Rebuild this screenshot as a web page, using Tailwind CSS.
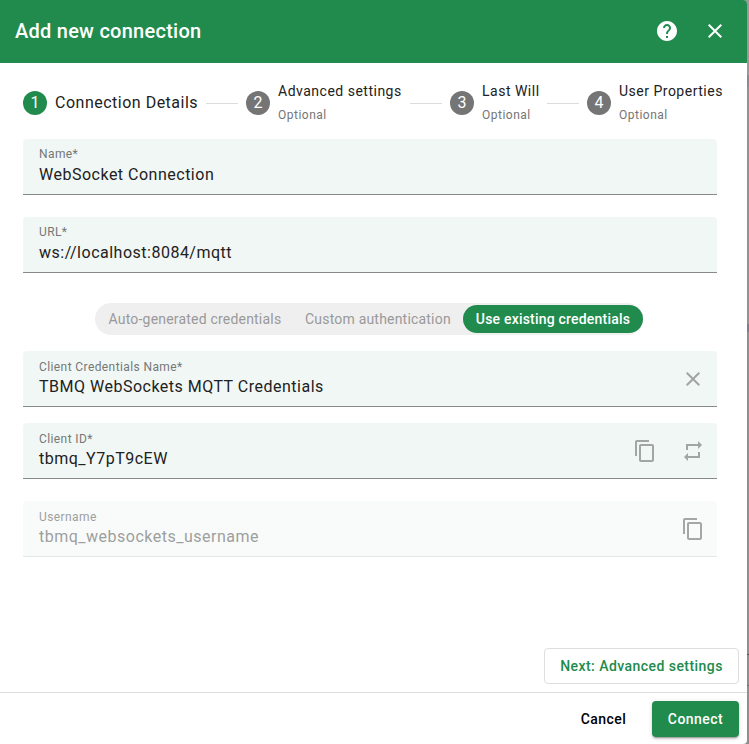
<!DOCTYPE html>
<html lang="en">
<head>
<meta charset="utf-8">
<title>Add new connection</title>
<script src="https://cdn.jsdelivr.net/npm/@tailwindcss/browser@4"></script>
</head>
<body class="w-[749px] h-[744px] overflow-hidden bg-[#8f8f8f] font-[Roboto,sans-serif] text-[#212121] flex">
<svg class="hidden">
  <symbol id="close" viewBox="0 0 24 24"><path d="M19 6.41 17.59 5 12 10.59 6.41 5 5 6.41 10.59 12 5 17.59 6.41 19 12 13.41 17.59 19 19 17.59 13.41 12z"/></symbol>
  <symbol id="copy" viewBox="0 0 24 24"><path d="M16 1H4c-1.1 0-2 .9-2 2v14h2V3h12V1zm3 4H8c-1.1 0-2 .9-2 2v14c0 1.1.9 2 2 2h11c1.1 0 2-.9 2-2V7c0-1.1-.9-2-2-2zm0 16H8V7h11v14z"/></symbol>
</svg>
<div class="w-[747px] shrink-0 h-[744px] bg-white flex flex-col rounded-r">
  <header class="h-[63px] shrink-0 bg-[#208b4d] text-white flex items-center pl-[15px] pr-5 pb-0.5 rounded-tr">
    <h1 class="flex-1 text-[20px] leading-8 font-medium tracking-[0.25px]">Add new connection</h1>
    <svg class="size-6 mr-6" fill="currentColor" viewBox="0 0 24 24"><path d="M12 2C6.48 2 2 6.48 2 12s4.48 10 10 10 10-4.48 10-10S17.52 2 12 2zm1 17h-2v-2h2v2zm2.07-7.75-.9.92C13.45 12.9 13 13.5 13 15h-2v-.5c0-1.1.45-2.1 1.17-2.83l1.24-1.26c.37-.36.59-.86.59-1.41 0-1.1-.9-2-2-2s-2 .9-2 2H8c0-2.21 1.79-4 4-4s4 1.79 4 4c0 .88-.36 1.68-.93 2.25z"/></svg>
    <svg class="size-6" fill="currentColor"><use href="#close"/></svg>
  </header>

  <nav class="h-[76px] pt-1 shrink-0 flex items-center pl-[23px] whitespace-nowrap">
    <div class="size-6 mr-2 rounded-full bg-[#208b4d] text-white text-[16px] grid place-items-center">1</div>
    <div class="w-[143px] text-[16px] leading-6 tracking-[0.5px]">Connection Details</div>
    <div class="w-8 h-px mx-2 bg-[#dcdcdc]"></div>
    <div class="size-6 mr-2 rounded-full bg-[#757575] text-white text-[16px] grid place-items-center">2</div>
    <div class="w-[124px]"><div class="text-[14px] leading-6 tracking-[0.5px]">Advanced settings</div><div class="text-[12px] leading-6 tracking-[0.5px] text-[#757575]">Optional</div></div>
    <div class="w-8 h-px mx-2 bg-[#dcdcdc]"></div>
    <div class="size-6 mr-2 rounded-full bg-[#757575] text-white text-[16px] grid place-items-center">3</div>
    <div class="w-[57px]"><div class="text-[14px] leading-6 tracking-[0.5px]">Last Will</div><div class="text-[12px] leading-6 tracking-[0.5px] text-[#757575]">Optional</div></div>
    <div class="w-8 h-px mx-2 bg-[#dcdcdc]"></div>
    <div class="size-6 mr-2 rounded-full bg-[#757575] text-white text-[16px] grid place-items-center">4</div>
    <div><div class="text-[14px] leading-6 tracking-[0.5px]">User Properties</div><div class="text-[12px] leading-6 tracking-[0.5px] text-[#757575]">Optional</div></div>
  </nav>

  <main class="flex-1 flex flex-col pl-[23px] pr-[30px]">
    <div class="h-14 bg-[#f1f7f5] rounded-t border-b border-[#868a89] px-4 pt-[7px]">
      <div class="text-[12px] leading-4 tracking-[0.4px] text-[#757877]">Name*</div>
      <div class="mt-px text-[16px] leading-6 tracking-[0.5px]">WebSocket Connection</div>
    </div>
    <div class="mt-[22px] h-14 bg-[#f1f7f5] rounded-t border-b border-[#868a89] px-4 pt-[7px]">
      <div class="text-[12px] leading-4 tracking-[0.4px] text-[#757877]">URL*</div>
      <div class="mt-px text-[16px] leading-6 tracking-[0.5px]">ws://localhost:8084/mqtt</div>
    </div>

    <div class="mt-[30px] ml-[72px] w-[548px] h-8 rounded-full bg-[#efefef] flex items-center text-[14px] font-normal tracking-[0.2px] text-[#999] whitespace-nowrap">
      <div class="w-[198px] pl-[13.5px]">Auto-generated credentials</div>
      <div class="w-[170px] pl-3">Custom authentication</div>
      <div class="w-[180px] h-7 rounded-full bg-[#208b4d] text-white font-medium grid place-items-center">Use existing credentials</div>
    </div>

    <div class="mt-4 h-14 bg-[#f1f7f5] rounded-t border-b border-[#868a89] pl-4 pr-3 flex items-center">
      <div class="flex-1 pt-px">
        <div class="text-[12px] leading-4 tracking-[0.4px] text-[#757877]">Client Credentials Name*</div>
        <div class="text-[16px] leading-6 tracking-[0.5px]">TBMQ WebSockets MQTT Credentials</div>
      </div>
      <svg class="size-6 text-[#a1a5a3]" fill="currentColor"><use href="#close"/></svg>
    </div>
    <div class="mt-4 h-14 bg-[#f1f7f5] rounded-t border-b border-[#868a89] pl-4 pr-3 flex items-center">
      <div class="flex-1 pt-px">
        <div class="text-[12px] leading-4 tracking-[0.4px] text-[#757877]">Client ID*</div>
        <div class="text-[16px] leading-6 tracking-[0.5px]">tbmq_Y7pT9cEW</div>
      </div>
      <svg class="size-6 mr-6 text-[#a1a5a3]" fill="currentColor"><use href="#copy"/></svg>
      <svg class="size-6 text-[#a1a5a3]" fill="currentColor" viewBox="0 0 24 24"><path d="M7 7h10v3l4-4-4-4v3H5v6h2V7zm10 10H7v-3l-4 4 4 4v-3h12v-6h-2v4z"/></svg>
    </div>
    <div class="mt-[22px] h-14 bg-[#f9fbfa] rounded-t border-b border-[#e2e8e5] pl-4 pr-3 flex items-center">
      <div class="flex-1 pt-px">
        <div class="text-[12px] leading-4 tracking-[0.4px] text-[#9d9f9e]">Username</div>
        <div class="text-[16px] leading-6 tracking-[0.5px] text-[#9d9f9e]">tbmq_websockets_username</div>
      </div>
      <svg class="size-6 text-[#a5a7a6]" fill="currentColor"><use href="#copy"/></svg>
    </div>
  </main>

  <div class="shrink-0 flex justify-end pr-2 pb-2">
    <button class="w-[195px] h-9 rounded border border-[#dedede] text-[#208b4d] text-[14px] font-medium tracking-[0.45px]">Next: Advanced settings</button>
  </div>
  <footer class="h-[52px] shrink-0 border-t border-[#dedede] flex items-start justify-end pr-2 pt-2">
    <button class="w-[77px] mr-[10px] h-9 text-black text-[14px] font-medium tracking-[0.45px]">Cancel</button>
    <button class="w-[87px] h-9 rounded bg-[#208b4d] text-white text-[14px] font-medium tracking-[0.45px] shadow-[0_3px_1px_-2px_rgba(0,0,0,0.2),0_2px_2px_rgba(0,0,0,0.14),0_1px_5px_rgba(0,0,0,0.12)]">Connect</button>
  </footer>
</div>
<!-- Dimmed page edge behind the dialog -->
<div class="w-0.5 shrink-0 h-[744px] flex flex-col">
  <div class="h-[75px] bg-[#9b9999]"></div>
  <div class="h-[12px] bg-[#8b8b8f]"></div>
  <div class="h-[237px] bg-[#929292]"></div>
  <div class="h-[8px] bg-[#7d7f88]"></div>
  <div class="h-[322px] bg-[#8f8f8f]"></div>
  <div class="h-px bg-[#555]"></div>
  <div class="h-[30px] bg-[#8f8f8f]"></div>
  <div class="h-px bg-[#6f6f6f]"></div>
  <div class="flex-1 bg-[#8f8f8f]"></div>
</div>
</body>
</html>
